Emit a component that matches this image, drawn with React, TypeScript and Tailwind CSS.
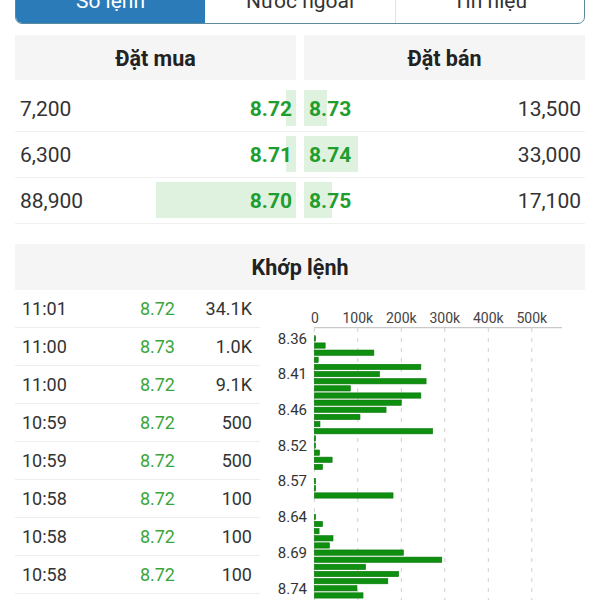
import React from "react";

const book = [
  { bq: "7,200", bp: "8.72", bw: "w-[10px]", sp: "8.73", sq: "13,500", sw: "w-[23px]" },
  { bq: "6,300", bp: "8.71", bw: "w-[10px]", sp: "8.74", sq: "33,000", sw: "w-[54px]" },
  { bq: "88,900", bp: "8.70", bw: "w-[140px]", sp: "8.75", sq: "17,100", sw: "w-[28px]" },
];

const trades = [
  ["11:01", "8.72", "34.1K"],
  ["11:00", "8.73", "1.0K"],
  ["11:00", "8.72", "9.1K"],
  ["10:59", "8.72", "500"],
  ["10:59", "8.72", "500"],
  ["10:58", "8.72", "100"],
  ["10:58", "8.72", "100"],
  ["10:58", "8.72", "100"],
];

const vols = [
  1.5, 25, 137, 9, 245, 150, 257, 83, 245, 200, 165, 105, 13, 272, 1.5, 1.5, 12, 41, 19, 0, 1.5, 1, 181, 0, 0,
  1.5, 19, 11, 43, 35, 205, 293, 118, 194, 169, 98, 112,
];

const yLabels: [number, string][] = [
  [0, "8.36"],
  [5, "8.41"],
  [10, "8.46"],
  [15, "8.52"],
  [20, "8.57"],
  [25, "8.64"],
  [30, "8.69"],
  [35, "8.74"],
];

const X0 = 314.3;
const PX = 0.435;
const Y0 = 338.4;
const STEP = 7.14;

function Chart() {
  const grid = [0, 100, 200, 300, 400, 500];
  return (
    <svg width={325} height={310} viewBox="260 290 325 310" className="block shrink-0">
      {grid.map((g) => (
        <text
          key={"x" + g}
          x={X0 + g * PX + (g === 0 ? 0.7 : 0)}
          y={323}
          textAnchor="middle"
          fontSize={14}
          fill="#444"
          fontFamily="Roboto, sans-serif"
        >
          {g === 0 ? "0" : g + "k"}
        </text>
      ))}
      <line x1={X0} y1={327.7} x2={562} y2={327.7} stroke="#bdbdbd" strokeWidth={1} />
      {grid.map((g) => (
        <line
          key={"g" + g}
          x1={X0 + g * PX}
          y1={328}
          x2={X0 + g * PX}
          y2={600}
          stroke="#cfcfcf"
          strokeWidth={1}
          strokeDasharray="4 6"
        />
      ))}
      {vols.map((v, i) =>
        v > 0 ? (
          <rect
            key={"b" + i}
            x={X0}
            y={Y0 + STEP * i - 2.65}
            width={Math.max(v * PX, 1.3)}
            height={5.3}
            fill="#0f8f0f"
            stroke="#0a760a"
            strokeWidth={0.6}
          />
        ) : null
      )}
      {yLabels.map(([i, t]) => (
        <text
          key={"y" + t}
          x={307}
          y={Y0 + STEP * i + 5.2}
          textAnchor="end"
          fontSize={15}
          fill="#333"
          fontFamily="Roboto, sans-serif"
        >
          {t}
        </text>
      ))}
    </svg>
  );
}

export default function App() {
  return (
    <div className="w-[600px] h-[600px] overflow-hidden bg-white font-['Roboto','Noto_Sans',sans-serif]">
      {/* tabs */}
      <div className="mx-[15px] -mt-[20px] h-[44px] flex border border-[#5b8b9b] rounded-[7px] overflow-hidden text-[21px]">
        <div className="w-[189px] bg-[#2b7bb9] text-white flex items-center justify-center">Sổ lệnh</div>
        <div className="w-[190px] text-[#333] flex items-center justify-center">Nước ngoài</div>
        <div className="flex-1 border-l border-[#e2e2e2] text-[#333] flex items-center justify-center">Tín hiệu</div>
      </div>

      {/* order book */}
      <div className="mt-[11px] px-[15px]">
        <div className="grid grid-cols-2 gap-[8px]">
          <div className="h-[45px] pt-[3px] bg-[#f5f5f5] flex items-center justify-center font-bold text-[21.5px] text-[#222]">
            Đặt mua
          </div>
          <div className="h-[45px] pt-[3px] bg-[#f5f5f5] flex items-center justify-center font-bold text-[21.5px] text-[#222]">
            Đặt bán
          </div>
        </div>
        <div className="mt-[6px]">
          {book.map((r, i) => (
            <div key={i} className="h-[46px] pt-[2px] border-b border-[#f0f0f0] grid grid-cols-2 gap-[8px] text-[21px]">
              <div className="relative flex items-center justify-between pl-[5px] pr-[4px]">
                <div className={"absolute right-0 top-[2px] bottom-[5px] bg-[#dff2df] " + r.bw} />
                <span className="relative text-[#333]">{r.bq}</span>
                <span className="relative font-bold text-[#1f9d2f]">{r.bp}</span>
              </div>
              <div className="relative flex items-center justify-between pl-[5px] pr-[4px]">
                <div className={"absolute left-0 top-[2px] bottom-[5px] bg-[#dff2df] " + r.sw} />
                <span className="relative font-bold text-[#1f9d2f]">{r.sp}</span>
                <span className="relative text-[#333]">{r.sq}</span>
              </div>
            </div>
          ))}
        </div>
      </div>

      {/* matched orders */}
      <div className="mt-[20px] mx-[15px] h-[46px] pt-[3px] bg-[#f5f5f5] flex items-center justify-center font-bold text-[21.5px] text-[#222]">
        Khớp lệnh
      </div>
      <div className="flex items-start">
        <div className="ml-[15px] w-[245px] shrink-0">
          {trades.map((t, i) => (
            <div key={i} className="h-[38px] border-b border-[#eeeeee] flex items-center text-[18px] pl-[7px] pr-[8px]">
              <span className="flex-1 text-[#333]">{t[0]}</span>
              <span className="w-[60px] text-right text-[#3ba53b]">{t[1]}</span>
              <span className="w-[77px] text-right text-[#333]">{t[2]}</span>
            </div>
          ))}
        </div>
        <Chart />
      </div>
    </div>
  );
}
